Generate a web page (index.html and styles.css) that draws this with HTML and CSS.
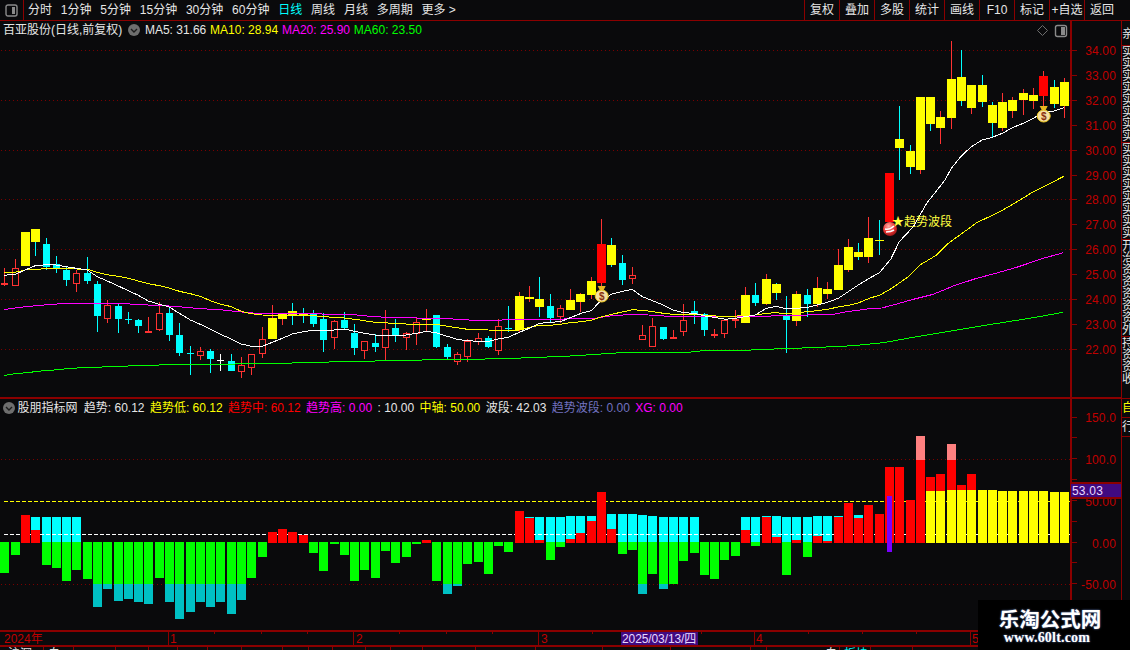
FILE: index.html
```html
<!DOCTYPE html>
<html lang="zh-CN">
<head>
<meta charset="utf-8">
<title>百亚股份</title>
<link rel="stylesheet" href="styles.css">
</head>
<body>
<div class="terminal">
  <header class="topbar">
    <div class="layout-btn">
      <svg class="panel-icon" width="13" height="13" viewBox="0 0 13 13"><rect x="1" y="1" width="11" height="11" rx="2" class="pi-frame"/><rect x="7" y="3" width="3" height="7" class="pi-fill"/></svg>
    </div>
    <nav class="periods">
      <span>分时</span><span>1分钟</span><span>5分钟</span><span>15分钟</span><span>30分钟</span><span>60分钟</span><span class="active">日线</span><span>周线</span><span>月线</span><span>多周期</span><span>更多 &gt;</span>
    </nav>
    <nav class="tools">
      <span>复权</span><span>叠加</span><span>多股</span><span>统计</span><span>画线</span><span>F10</span><span>标记</span><span>+自选</span><span>返回</span>
    </nav>
  </header>
  <div class="workspace">
    <div class="charts">
      <section class="panel panel-main">
        <div class="legend">
          <span class="stock">百亚股份(日线,前复权)</span>
          <svg class="chevron" width="12" height="12" viewBox="0 0 12 12"><circle cx="6" cy="6" r="6" class="ch-bg"/><path d="M3 5l3 3 3-3" class="ch-mark"/></svg>
          <span class="c-white m5">MA5: 31.66</span>
          <span class="c-yellow">MA10: 28.94</span>
          <span class="c-magenta">MA20: 25.90</span>
          <span class="c-green">MA60: 23.50</span>
        </div>
        <svg id="main-chart" class="chart" width="1121" height="376" viewBox="0 21 1121 376"></svg>
      </section>
      <section class="panel panel-sub">
        <div class="legend legend-sub">
          <svg class="chevron" width="12" height="12" viewBox="0 0 12 12"><circle cx="6" cy="6" r="6" class="ch-bg"/><path d="M3 5l3 3 3-3" class="ch-mark"/></svg>
          <span class="c-white name">股朋指标网</span>
          <span class="c-white">趋势: 60.12</span>
          <span class="c-yellow">趋势低: 60.12</span>
          <span class="c-red">趋势中: 60.12</span>
          <span class="c-magenta">趋势高: 0.00</span>
          <span class="c-white">: 10.00</span>
          <span class="c-yellow">中轴: 50.00</span>
          <span class="c-white">波段: 42.03</span>
          <span class="c-slate">趋势波段: 0.00</span>
          <span class="c-magenta">XG: 0.00</span>
        </div>
        <svg id="sub-chart" class="chart" width="1121" height="231" viewBox="0 399 1121 231"></svg>
      </section>
      <svg id="time-axis" class="chart" width="1121" height="20" viewBox="0 630 1121 20"></svg>
    </div>
    <aside class="strip">
      <div class="strip-cell s1"><span>亲</span></div>
      <div class="strip-cell s2"><span>实实实实实实实实</span></div>
      <div class="strip-cell s2"><span>实实实实实实实实</span></div>
      <div class="strip-cell s2"><span>开治资资资资资外</span></div>
      <div class="strip-cell s3"><span>持资资收</span></div>
      <div class="strip-cell s4 c-yellow"><span>自</span></div>
      <div class="strip-cell s4"><span>行</span></div>
    </aside>
  </div>
  <div class="watermark">
    <strong>乐淘公式网</strong>
    <em>www.60lt.com</em>
  </div>
</div>
<script src="chart.js"></script>
</body>
</html>
```

FILE: styles.css
```css
* { box-sizing: border-box; }
html, body { margin: 0; padding: 0; background: #0a0a0c; overflow: hidden; }
body {
  width: 1130px;
  height: 650px;
  font: 12px/14px "Liberation Sans", "Noto Sans CJK SC", sans-serif;
  color: #e6e6e6;
}
.terminal { position: relative; width: 1130px; height: 650px; overflow: hidden; }

.topbar {
  display: flex;
  height: 21px;
  border-bottom: 1px solid #8b0000;
}
.layout-btn {
  width: 24px;
  display: flex;
  align-items: center;
  justify-content: center;
  border-right: 1px solid #8b0000;
}
.pi-frame { fill: none; stroke: #8a8a8a; stroke-width: 1.4; }
.pi-fill { fill: #8a8a8a; }
.periods {
  display: flex;
  align-items: center;
  gap: 8.8px;
  padding-left: 4px;
  white-space: nowrap;
}
.periods .active { color: #00ffff; }
.tools {
  display: flex;
  margin-left: auto;
  margin-right: 11px;
}
.tools span {
  width: 35px;
  text-align: center;
  line-height: 20px;
  border-left: 1px solid #8b0000;
}

.workspace { display: flex; height: 629px; }
.charts { width: 1121px; flex: none; }
.panel { position: relative; border-bottom: 2px solid #8b0000; }
.panel-main { height: 378px; }
.panel-sub { height: 231px; border-bottom: 0; }
.chart { display: block; }

.legend {
  position: absolute;
  left: 3px;
  top: 1px;
  display: flex;
  align-items: center;
  gap: 3.8px;
  white-space: nowrap;
  height: 15px;
}
.legend .chevron { margin: 0 1px 0 2px; }
.legend-sub { top: 1px; gap: 5.4px; }
.legend-sub .chevron { margin: 0 1px 0 0; }
.legend-sub .name { margin: 0 1px 0 -4px; }
.ch-bg { fill: #6e6e6e; }
.ch-mark { fill: none; stroke: #1c1c1c; stroke-width: 1.4; }

.c-white { color: #e6e6e6; }
.c-yellow { color: #ffff00; }
.c-magenta { color: #ff00ff; }
.c-green { color: #00ff00; }
.c-red { color: #ff0000; }
.c-slate { color: #7272c0; }

.strip {
  width: 9px;
  flex: none;
  border-left: 1px solid #8b0000;
  overflow: hidden;
  color: #e6e6e6;
}
.strip-cell {
  overflow: hidden;
  border-bottom: 1px solid #8b0000;
}
.strip-cell span { display: block; width: 12px; line-height: 12px; }
.s1 { height: 25px; padding-top: 7px; }
.s2 { height: 97px; }
.s3 { height: 62px; }
.s4 { height: 19px; padding-top: 3px; }

/* chart parts */
.grid { stroke: #7a0000; stroke-width: 1; stroke-dasharray: 1 3; fill: none; }
.axis { fill: #8b0000; }
.tick { stroke: #8b0000; stroke-width: 1; shape-rendering: crispEdges; }
.axis-label { fill: #c00000; font: 12px "Liberation Sans", sans-serif; text-anchor: end; letter-spacing: .15px; }
.wick, .body, .bar, .line { shape-rendering: crispEdges; }
.wick { stroke-width: 1; }
.w-red { stroke: #ff3232; }
.w-cyan { stroke: #00ffff; }
.w-white { stroke: #ffffff; }
.b-yellow { fill: #ffff00; }
.b-cyan { fill: #00ffff; }
.b-red { fill: #ff0000; }
.b-hollow { fill: #0a0a0c; stroke: #ff3232; stroke-width: 1; }
.b-flat { fill: #ff3232; }
.b-white { fill: #ffffff; }
.b-green { fill: #00ff00; }
.b-teal { fill: #00c0c4; }
.b-pink { fill: #ff8080; }
.b-purple { fill: #7a00ff; }
.line { fill: none; stroke-width: 1; stroke-linejoin: round; }
.l-white { stroke: #ffffff; }
.l-yellow { stroke: #ffff00; }
.l-magenta { stroke: #ff00ff; }
.l-green { stroke: #00ff00; }
.dash { stroke-width: 1; stroke-dasharray: 4 2; shape-rendering: crispEdges; }
.d-yellow { stroke: #ffff00; }
.d-white { stroke: #ffffff; }
.signal { fill: #ffff40; font: 12px "Liberation Sans", "Noto Sans CJK SC", sans-serif; }
.bag-neck { fill: #e8b820; }
.bag-body { fill: #f6e0a0; stroke: #f0c820; stroke-width: 1; }
.bag-mark { fill: #8a3010; font: bold 10px "Liberation Sans", sans-serif; text-anchor: middle; }
.diamond { fill: none; stroke: #6e6e6e; stroke-width: 1; }
.price-box { fill: #400a80; }
.price-edge { fill: #8b0000; }
.price-text { fill: #e8d8ff; font: 12px "Liberation Sans", sans-serif; letter-spacing: .2px; }
.time-label { fill: #c00000; font: 12px "Liberation Sans", "Noto Sans CJK SC", sans-serif; }
.date-box { fill: #400a80; }
.date-text { fill: #e8d8ff; font: 12px "Liberation Sans", "Noto Sans CJK SC", sans-serif; letter-spacing: -.1px; }
.tab-text { fill: #e6e6e6; font: 12px "Liberation Sans", "Noto Sans CJK SC", sans-serif; }
.tab-active { fill: #00ffff; }
.ball-swirl { fill: none; stroke: #ffffff; stroke-width: 1.6; }

.watermark {
  position: absolute;
  right: 0;
  bottom: 0;
  width: 152px;
  height: 50px;
  background: #000;
  display: flex;
  flex-direction: column;
  align-items: center;
  padding: 6px 8px 0 0;
  color: #fff;
  text-shadow: 0 0 2px #6f8fd0;
}
.watermark strong { font: bold 20.5px/24px "Noto Sans CJK SC", sans-serif; }
.watermark em { font: bold 14px/16px "Liberation Serif", serif; letter-spacing: .2px; margin-right: 6px; }
```

FILE: chart.js
```js
// Candles: [kind, bodyTop, bodyBottom, wickTop, wickBottom, wickColour] in zoomed coordinates.
var Y = 'y', C = 'c', H = 'h', F = 'f', W = 'w', R = 'r';
function seg(y0, list) {
  return list.map(function (c) {
    return [c[0], y0 + c[1] / 3, y0 + c[2] / 3, y0 + c[3] / 3, y0 + c[4] / 3, c[5]];
  });
}
var candles = [].concat(
  seg(215, [
    [F,204,209,160,212],[H,160,212,132,212],[Y,51,153,51,153],[Y,42,81,42,123,C],[C,87,156,69,165],
    [C,147,160,123,174],[C,165,195,155,213],[H,175,206,165,231],[C,174,198,126,207],[C,207,303,198,351],
    [H,271,311,255,324],[C,273,312,267,354],[C,312,315,291,327],[C,315,333,312,354],[F,349,354,306,354],
    [H,295,344,261,348],[C,294,360,276,378],[C,360,414,324,423],[C,414,417,393,480],[H,409,422,396,435],
    [C,408,432,402,474],[W,435,438,417,468],[C,438,468,417,468],[H,451,472,426,489],[H,418,458,418,480],
    [H,373,418,336,429],[Y,309,372,270,372,R],[Y,294,312,294,330,R],[Y,288,303,264,330,C],[Y,297,301,279,324,C],
    [C,297,327,285,336],[C,312,375,294,411],[H,319,368,315,402],[C,315,339,291,345],
    [C,354,399,327,420],[H,379,407,379,432],[C,384,396,357,411],[H,343,398,285,438],[C,339,360,312,381],
    [H,355,368,351,405],[H,322,358,309,390],[Y,309,315,282,348,R],[C,300,396,300,399],[C,396,426,387,435],
    [H,418,440,411,450],[H,379,425,372,441],[H,370,380,354,390],[C,369,396,363,399],[H,334,407,312,420],
    [C,339,342,273,351],[Y,243,345,231,354,R],[Y,246,252,213,261,R],[Y,252,276,186,306,C],[C,273,309,237,321],
    [H,280,305,270,324],[Y,255,285,222,285,R],[Y,237,261,234,291,R],[Y,198,240,186,252,R],[F+'r',87,204,12,215,R],
    [Y,90,150,69,156,C],[C,144,195,120,210],[H,181,193,156,207],[H,361,374,331,374],[H,334,395,309,395],
    [C,336,372,336,375],[H,367,373,346,373],[H,316,350,267,363],[C,288,297,258,327]
  ]),
  seg(180, [
    [C,402,450,399,468],[F,462,468,447,474],[H,420,461,420,474],[F,417,423,390,444],[Y,345,429,321,429,R],
    [C,345,369,309,378],[Y,297,372,282,375,R],[Y,312,339,309,360,C],[C,408,420,348,519],[Y,342,423,333,438,R],
    [C,345,372,327,411],[Y,324,372,291,381,R],[Y,327,342,306,357,R],[Y,255,330,207,330,R],[Y,201,270,177,276,R],
    [Y,216,231,189,240,C],[Y,174,231,111,249,R],[Y,180,183,120,225,C]
  ]),
  seg(30, [
    [F+'r',429,576,429,576,R],[Y,327,354,228,450,C],[Y,363,411,345,432,C],[Y,201,420,201,432,R],[Y,201,282,201,303,C],
    [Y,261,294,243,342,R],[Y,147,264,33,297,R],[Y,141,213,60,228,C],[Y,165,234,165,252,R],[Y,165,216,135,231,C],
    [Y,225,279,216,321,C],[Y,216,294,189,303,R],[Y,210,243,201,264,R],[Y,189,210,177,255,R],[Y,195,213,174,237,R],
    [F+'r',138,198,123,240,R],[Y,171,222,150,234,C],[Y,156,228,144,264,R]
  ])
);

// Lines traced in zoom crops: [x0, y0, flat list of x,y]
function trace(parts) {
  var pts = [];
  parts.forEach(function (p) {
    for (var i = 0; i < p[2].length; i += 2) {
      pts.push((p[0] + p[2][i] / 3).toFixed(1) + ',' + (p[1] + p[2][i + 1] / 3).toFixed(1));
    }
  });
  return pts.join(' ');
}
var lines = {
  green: trace([
    [0,215,[12,482,30,478,60,475,90,472,123,468,153,466,183,463,213,460,275,457,340,455,430,451,585,448,830,446,925,442,1050,440]],
    [350,215,[153,436,370,433,490,430,645,424,740,418,830,412,1017,412,1050,408]],
    [700,180,[90,512,180,509,240,506,335,503,460,497,550,488,640,472,760,452,880,432,1000,413,1090,397]]
  ]),
  magenta: trace([
    [0,215,[12,284,30,281,60,277,90,274,123,271,153,268,213,265,372,266,460,271,525,274,588,280,670,285,715,290,770,295,1050,298]],
    [350,215,[60,304,123,308,275,310,370,316,550,314,735,310,770,304,830,299,895,300,955,304,1050,304]],
    [700,180,[180,409,400,403,430,397,500,387,545,384,580,375,640,358,700,343,760,318,830,295,880,282,950,262,1030,235,1090,218]]
  ]),
  yellow: trace([
    [0,215,[12,173,45,172,76,165,106,163,139,161,199,161,262,163,292,172,322,179,355,184,385,190,415,198,445,206,478,212,508,219,538,229,571,236,601,244,631,257,661,267,694,275,724,289,754,296,787,300,847,301,910,301,970,304,1003,308,1033,309]],
    [350,215,[14,313,43,317,76,322,106,323,136,326,199,328,259,328,292,334,322,338,352,343,415,345,475,346,508,345,538,337,568,331,601,331,631,328,661,323,694,320,724,316,754,306,784,298,817,291,847,284,877,286,910,290,940,295,970,298,1033,298]],
    [700,180,[76,410,166,405,199,400,229,398,259,402,322,395,352,392,382,388,415,381,445,376,475,369,508,355,540,345,575,325,625,290,660,255,710,225,745,190,800,150,830,128,900,95,960,60,1000,35,1070,0]],
    [860,30,[613,438]]
  ]),
  white: trace([
    [0,215,[12,181,45,178,76,165,106,152,139,149,169,150,199,155,229,160,262,165,292,185,322,198,355,213,385,227,415,241,445,258,478,268,508,276,538,295,571,315,601,328,631,342,661,358,694,372,724,387,754,394,787,394,817,382,847,370,877,357,910,350,940,346,970,346,1003,345,1033,342]],
    [350,215,[14,349,43,355,76,360,106,362,136,362,169,360,199,355,229,349,259,353,292,364,322,373,352,377,385,379,415,379,445,372,475,367,508,352,538,340,568,325,601,322,631,320,661,308,694,295,724,287,745,265,754,258,784,238,817,229,847,223,877,245,910,258,940,270,970,285,1000,293,1033,295]],
    [700,180,[15,408,43,412,76,418,106,415,166,405,199,385,229,379,259,387,292,385,322,382,352,375,382,367,415,355,445,335,475,315,508,295,538,278,572,238,598,185,640,140,680,70,735,0]],
    [860,30,[274,415,304,378,334,350,367,330,397,322,427,310,460,292,490,280,520,265,550,248,583,243,613,233]]
  ])
};

function left(i) { return Math.floor(0.95 + 10.285 * i); }
function rect(cls, x, y, w, h) {
  return '<rect class="' + cls + '" x="' + x + '" y="' + y + '" width="' + w + '" height="' + h + '"/>';
}
function hline(cls, y, x1, x2) {
  return '<line class="' + cls + '" x1="' + x1 + '" x2="' + x2 + '" y1="' + y + '" y2="' + y + '"/>';
}

// ---------- main chart ----------
var out = '';
[34, 32, 30, 28, 26, 24, 22].forEach(function (p) {
  out += hline('grid', Math.round(349 - (p - 22) * 24.92) + 0.5, 1, 1070);
});
candles.forEach(function (c, i) {
  var x = left(i), k = c[0], top = Math.round(c[1]), bot = Math.round(c[2]);
  var wt = Math.round(c[3]), wb = Math.round(c[4]);
  var wickCls = c[5] ? (c[5] === C ? 'w-cyan' : 'w-red') :
    (k === C ? 'w-cyan' : k === W ? 'w-white' : 'w-red');
  if (wb > wt) out += '<line class="wick ' + wickCls + '" x1="' + (x + 4.5) + '" x2="' + (x + 4.5) + '" y1="' + wt + '" y2="' + wb + '"/>';
  var h = Math.max(1, bot - top);
  if (k === H) out += rect('body b-hollow', x + 1.5, top + 0.5, 6, Math.max(1, h - 1));
  else if (k === Y) out += rect('body b-yellow', x, top, 9, h);
  else if (k === C) out += rect('body b-cyan', x + 1, top, 7, h);
  else if (k === F) out += rect('body b-flat', x + 1, top, 7, h);
  else if (k === W) out += rect('body b-white', x + 1, top, 7, 1);
  else out += rect('body b-red', x, top, 9, h);
});
['green', 'magenta', 'yellow', 'white'].forEach(function (n) {
  out += '<polyline class="line l-' + n + '" points="' + lines[n] + '"/>';
});
function bag(cx, cy) {
  return '<g transform="translate(' + cx + ' ' + cy + ')">' +
    '<path class="bag-neck" d="M-4-9h8l-2 4h-4z"/>' +
    '<ellipse class="bag-body" cx="0" cy="1" rx="6.5" ry="6"/>' +
    '<text class="bag-mark" x="0" y="4.5">$</text></g>';
}
out += bag(601.7, 295) + bag(1043.7, 115);
out += '<defs><radialGradient id="ballfill" cx=".4" cy=".3" r=".8"><stop offset="0" stop-color="#ffb0a8"/><stop offset=".55" stop-color="#e83030"/><stop offset="1" stop-color="#801010"/></radialGradient></defs>';
out += '<circle cx="890" cy="229" r="7" fill="url(#ballfill)"/><path class="ball-swirl" d="M885 229q5 1 9-3M886 232q5 0 8-2"/>';
out += '<text class="signal" x="892" y="226">★趋势波段</text>';
// top-right icons
out += '<path class="diamond" d="M1042.5 25.5l5 5-5 5-5-5z"/>';
out += '<rect class="pi-frame" x="1055.5" y="25.5" width="11" height="11" rx="2"/><rect class="pi-fill" x="1061" y="27" width="4" height="8"/>';
// price axis
out += rect('axis', 1070, 21, 2, 376);
for (var p = 34; p >= 22; p--) {
  var y = Math.round(349 - (p - 22) * 24.92);
  out += hline('tick', y + 0.5, 1072, 1077);
  out += '<text class="axis-label" x="1116" y="' + (y + 5) + '">' + p.toFixed(2) + '</text>';
}
document.getElementById('main-chart').innerHTML = out;

// ---------- indicator chart: each bar [red top, cyan top, green bottom, yellow top, pink top]
function b(r, c, g, yl, pk) { return { r: r, c: c, g: g, y: yl, p: pk }; }
function zoomed(y0, rows) {
  return rows.map(function (a) {
    var o = {};
    ['r', 'c', 'g', 'y', 'p'].forEach(function (k) { if (a[k] != null) o[k] = y0 + a[k] / 3; });
    return o;
  });
}
var _ = null;
function G(v) { return b(_, _, v); }
function CG(c, v) { return b(_, c, v); }
function CR(c, r) { return b(r, c); }
function RR(r) { return b(r); }
var bars = [].concat(
  zoomed(490, [G(249),G(195),RR(75),CR(81,120),CG(81,225),CG(81,234),CG(81,273),CG(81,240),G(267),G(351),G(297),G(333),G(327),G(336),G(342),G(264),G(336),G(387),G(366),G(336),G(351),G(336),G(372),G(330),G(264),G(201),RR(126),RR(117),RR(126),RR(135),G(189),G(243),G(162),G(195),G(273),G(240)]),
  zoomed(480, [G(294),G(213),G(249),G(231),G(192),RR(180),G(303),G(342),G(318),G(252),G(246),G(282),G(198),G(216),RR(93),CR(111,114),CR(111,180),CG(111,240),CG(111,201),CR(108,177),CR(108,159),CR(108,123),RR(36),CR(102,147),CG(102,222),CG(102,210),CG(105,342),CG(108,282),CG(111,327),CG(111,312),CG(111,243),CG(111,219),G(285),G(297),G(240),G(228)]),
  zoomed(400, [CR(351,390),CG(351,438),CR(348,351),CR(348,411),CG(351,525),CR(351,420),CG(351,471),CR(348,408),CR(348,423),CR(348,351),RR(309),CR(345,354),RR(315),RR(342),RR(201),RR(201),RR(300),b(180,_,_,_,108),b(231,_,_,273),b(222,_,_,273),b(180,_,_,270,132),b(255,_,_,270),b(222,_,_,270),b(_,_,_,270),b(_,_,_,270),b(_,_,_,273),b(_,_,_,273),b(_,_,_,273),b(_,_,_,273),b(_,_,_,273),b(_,_,_,276),b(_,_,_,276)])
);
var s = '';
s += hline('grid', 459.5, 1, 1070) + hline('grid', 584.5, 1, 1070);
s += hline('dash d-yellow', 501.5, 4, 1070);
var Z0 = 542, ZR = 543, TEAL = 584;
var front = '';
bars.forEach(function (v, i) {
  var x = left(i);
  if (v.g != null) {
    var gb = Math.round(v.g);
    s += rect('bar b-green', x, Z0, 9, Math.max(2, Math.min(gb, TEAL) - Z0));
    if (gb > TEAL) s += rect('bar b-teal', x, TEAL, 9, gb - TEAL);
  }
  if (v.c != null) s += rect('bar b-cyan', x, Math.round(v.c), 9, Z0 - Math.round(v.c));
  if (v.p != null) {
    var pinkTop = Math.round(v.p);
    front += rect('bar b-pink', x, pinkTop, 9, 460 - pinkTop);
    if (v.y == null) front += rect('bar b-red', x, 460, 9, ZR - 460);
  }
  if (v.y != null) {
    if (v.r != null) front += rect('bar b-red', x, Math.round(v.r), 9, Math.round(v.y) - Math.round(v.r));
    front += rect('bar b-yellow', x, Math.round(v.y), 9, ZR - Math.round(v.y));
  } else if (v.r != null && v.p == null) {
    front += rect('bar b-red', x, Math.round(v.r), 9, ZR - Math.round(v.r));
  }
});
s += hline('dash d-white', 534.5, 4, 1070);
s += front;
s += rect('bar b-purple', 887, 496, 5, 56);
s += rect('axis', 1070, 399, 2, 231);
for (var t = 0; t < 11; t++) {
  s += hline('tick', Math.floor(417 + t * 20.85) + 0.5, 1072, 1077);
}
[['150.0', 417], ['100.0', 459], ['50.00', 501], ['0.00', 543], ['-50.00', 584]].forEach(function (a) {
  s += '<text class="axis-label" x="1116" y="' + (a[1] + 5) + '">' + a[0] + '</text>';
});
s += rect('price-box', 1071, 483, 50, 16) + rect('price-edge', 1071, 482, 50, 2) + rect('price-edge', 1071, 497, 50, 2);
s += '<text class="price-text" x="1072" y="495">53.03</text>';
document.getElementById('sub-chart').innerHTML = s;

// ---------- time axis and tab row ----------
var a = '';
a += rect('axis', 0, 630, 1121, 2) + rect('axis', 0, 645, 1121, 2);
[['2024年', 4, 0], ['1', 170, 168], ['2', 356, 353], ['3', 541, 538], ['4', 756, 754], ['5', 972, 970]].forEach(function (m) {
  if (m[2]) a += rect('axis', m[2], 632, 1, 14);
  a += '<text class="time-label" x="' + m[1] + '" y="643">' + m[0] + '</text>';
});
[214, 261, 307, 399, 446, 492, 592, 692, 701, 808, 862, 916].forEach(function (x) { a += rect('axis', x, 632, 1, 2); });
[43, 73, 115, 148, 177, 207, 241, 282, 308, 332, 365, 390, 422, 475, 535, 602, 670, 750, 766, 839, 870, 912].forEach(function (x) { a += rect('axis', x, 647, 1, 3); });
a += rect('date-box', 621, 632, 77, 13);
a += '<text class="date-text" x="622" y="643">2025/03/13/四</text>';
a += '<text class="tab-text" x="8" y="658">沪深</text><text class="tab-text" x="48" y="658">自</text>';
a += '<text class="tab-text" x="825" y="658">自</text><text class="tab-text tab-active" x="844" y="658">板块</text>';
document.getElementById('time-axis').innerHTML = a;
```
